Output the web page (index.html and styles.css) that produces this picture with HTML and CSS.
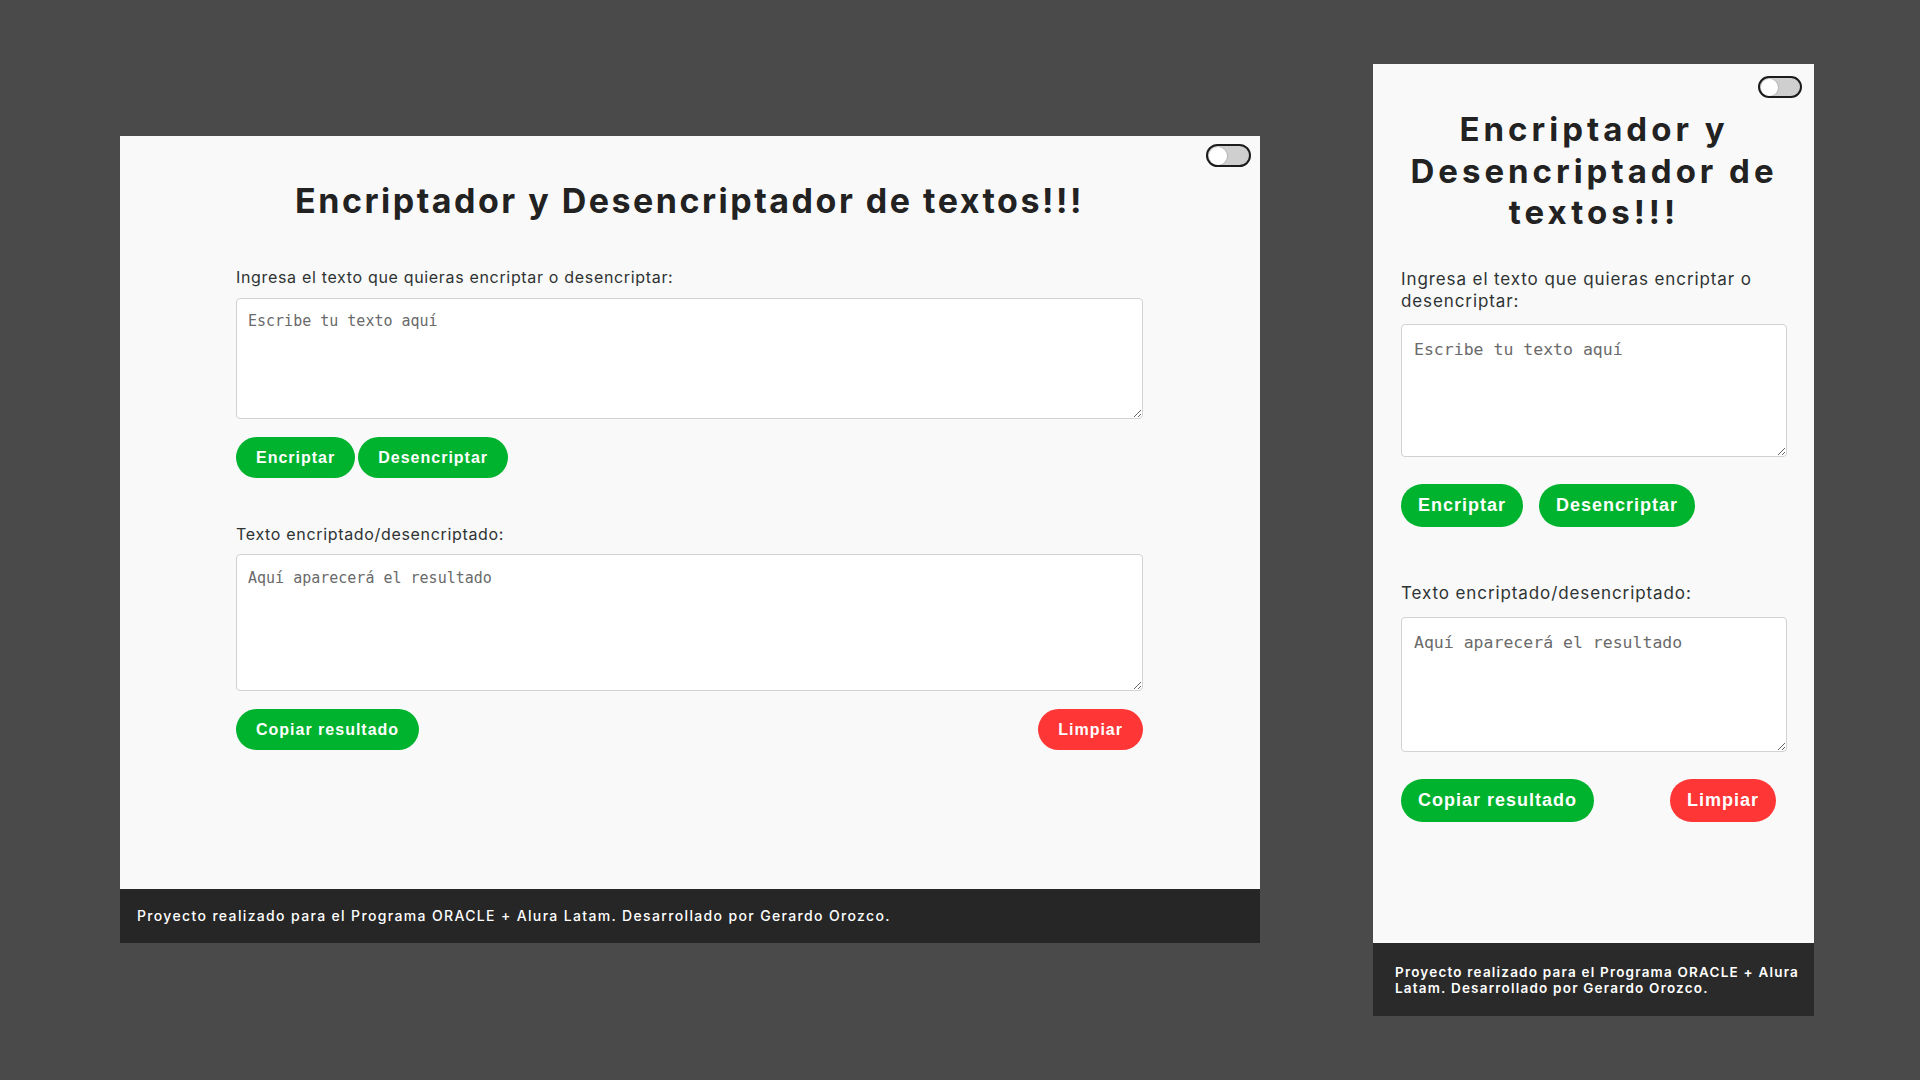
FILE: index.html
```html
<!DOCTYPE html>
<html lang="es">
<head>
<meta charset="utf-8">
<title>Encriptador y Desencriptador de textos</title>
<link rel="stylesheet" href="styles.css">
</head>
<body>
<div class="stage">
  <section class="panel panel--wide">
    <div class="toggle"><span class="toggle__knob"></span></div>
    <main class="app">
      <h1 class="title">Encriptador y Desencriptador de textos!!!</h1>
      <label class="label label--first" for="in1">Ingresa el texto que quieras encriptar o desencriptar:</label>
      <textarea id="in1" class="field field--input" placeholder="Escribe tu texto aquí"></textarea>
      <div class="actions actions--top">
        <button class="btn btn--green">Encriptar</button>
        <button class="btn btn--green">Desencriptar</button>
      </div>
      <label class="label label--second" for="out1">Texto encriptado/desencriptado:</label>
      <textarea id="out1" class="field field--output" placeholder="Aquí aparecerá el resultado" readonly></textarea>
      <div class="actions actions--bottom">
        <button class="btn btn--green">Copiar resultado</button>
        <button class="btn btn--red">Limpiar</button>
      </div>
    </main>
    <footer class="footer"><p class="footer__text">Proyecto realizado para el Programa ORACLE + Alura Latam. Desarrollado por Gerardo Orozco.</p></footer>
  </section>

  <section class="panel panel--narrow">
    <div class="toggle"><span class="toggle__knob"></span></div>
    <main class="app">
      <h1 class="title">Encriptador y Desencriptador de textos!!!</h1>
      <label class="label label--first" for="in2">Ingresa el texto que quieras encriptar o desencriptar:</label>
      <textarea id="in2" class="field field--input" placeholder="Escribe tu texto aquí"></textarea>
      <div class="actions actions--top">
        <button class="btn btn--green">Encriptar</button>
        <button class="btn btn--green">Desencriptar</button>
      </div>
      <label class="label label--second" for="out2">Texto encriptado/desencriptado:</label>
      <textarea id="out2" class="field field--output" placeholder="Aquí aparecerá el resultado" readonly></textarea>
      <div class="actions actions--bottom">
        <button class="btn btn--green">Copiar resultado</button>
        <button class="btn btn--red">Limpiar</button>
      </div>
    </main>
    <footer class="footer"><p class="footer__text">Proyecto realizado para el Programa ORACLE + Alura Latam. Desarrollado por Gerardo Orozco.</p></footer>
  </section>
</div>
</body>
</html>
```

FILE: styles.css
```css
* { box-sizing: border-box; }

html, body {
  margin: 0;
  padding: 0;
}

body {
  background: #4a4a4a;
  width: 1920px;
  height: 1080px;
  overflow: hidden;
  font-family: "Inter", "Noto Sans", sans-serif;
}

.stage {
  display: flex;
  align-items: flex-start;
  padding-left: 120px;
  gap: 113px;
}

.panel {
  position: relative;
  display: flex;
  flex-direction: column;
  background: #f9f9f9;
}

.panel--wide {
  margin-top: 136px;
  width: 1140px;
  height: 807px;
}

.panel--narrow {
  margin-top: 64px;
  width: 441px;
  height: 952px;
}

/* toggle switch */
.toggle {
  position: absolute;
  display: flex;
  align-items: center;
  background: #cfcfcf;
  border: 2px solid #1c1c1c;
  border-radius: 12px;
  padding: 0 1px;
}
.toggle__knob {
  display: block;
  background: #ffffff;
  border-radius: 50%;
  box-shadow: 1px 0 1px rgba(0,0,0,0.12);
}
.panel--wide .toggle { top: 8px; right: 9px; width: 45px; height: 23px; }
.panel--wide .toggle__knob { width: 18px; height: 18px; }
.panel--narrow .toggle { top: 12px; right: 12px; width: 44px; height: 22px; }
.panel--narrow .toggle__knob { width: 17px; height: 17px; }

.app {
  flex: 1;
  display: flex;
  flex-direction: column;
}

.panel--wide .app { padding: 44px 117px 0 116px; }
.panel--narrow .app { padding: 45px 27px 0 28px; }

.title {
  margin: 0;
  text-align: center;
  color: #222222;
  font-weight: 700;
}
.panel--wide .title { font-size: 34px; line-height: 42px; letter-spacing: 2.5px; }
.panel--narrow .title { font-size: 33px; line-height: 41.5px; letter-spacing: 4px; margin: 0 -12px; }

.label {
  display: block;
  color: #2e3333;
  font-weight: 400;
}
.panel--wide .label { font-size: 16px; line-height: 20px; letter-spacing: 0.67px; }
.panel--wide .label--first { margin-top: 45px; }
.panel--wide .label--second { margin-top: 46px; }
.panel--narrow .label { font-size: 17px; line-height: 22px; letter-spacing: 0.9px; }
.panel--narrow .label--first { margin-top: 34px; }
.panel--narrow .label--second { margin-top: 55px; }

.field {
  display: block;
  width: 100%;
  background: #ffffff;
  border: 1px solid #d2d2d2;
  border-radius: 4px;
  font-family: "DejaVu Sans Mono", "Liberation Mono", monospace;
  color: #333;
  resize: vertical;
  outline: none;
}
.field::placeholder { color: #6a6a6a; opacity: 1; }

.panel--wide .field { font-size: 15px; padding: 13px 11px; }
.panel--wide .field--input { margin-top: 11px; height: 121px; }
.panel--wide .field--output { margin-top: 10px; height: 137px; padding-top: 14px; }

.panel--narrow .field { font-size: 16.5px; padding: 15px 12px; }
.panel--narrow .field--input { margin-top: 12px; height: 133px; }
.panel--narrow .field--output { margin-top: 13px; height: 135px; }

.actions {
  display: flex;
  align-items: center;
}
.panel--wide .actions { margin-top: 18px; }
.panel--wide .actions--top { gap: 3px; }
.panel--wide .actions--bottom { justify-content: space-between; }
.panel--narrow .actions { margin-top: 27px; }
.panel--narrow .actions--top { gap: 16px; }
.panel--narrow .actions--bottom { justify-content: space-between; padding-right: 11px; }

.btn {
  border: none;
  color: #ffffff;
  font-family: "Liberation Sans", Arial, sans-serif;
  font-weight: 700;
  letter-spacing: 1px;
  border-radius: 22px;
  cursor: pointer;
}
.btn--green { background: #00b32e; }
.btn--red { background: #ff3636; }

.panel--wide .btn { font-size: 16px; line-height: 19px; padding: 11px 20px; }
.panel--narrow .btn { font-size: 18px; line-height: 21px; padding: 11px 17px; }

.footer {
  background: #262626;
  display: flex;
  align-items: center;
}
.footer__text {
  margin: 0;
  color: #ffffff;
  font-weight: 500;
}
.panel--wide .footer { height: 54px; padding-left: 17px; }
.panel--wide .footer__text { font-size: 14px; line-height: 16px; letter-spacing: 1.35px; }
.panel--narrow .footer { height: 73px; padding: 0 14px 0 22px; background: #2a2a2a; }
.panel--narrow .footer__text { font-size: 13.5px; line-height: 16px; letter-spacing: 1.2px; font-weight: 600; }
```
